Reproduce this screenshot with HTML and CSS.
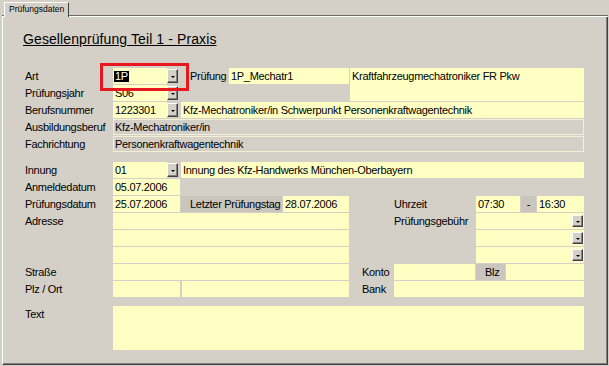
FILE: index.html
```html
<!DOCTYPE html>
<html lang="de">
<head>
    <meta charset="UTF-8">
    <title>Prüfungsdaten</title>
    <link rel="stylesheet" href="styles.css">
</head>
<body>
    <div class="tabs">
        <div class="tab">Prüfungsdaten</div>
    </div>

    <div class="panel">
        <h1 class="title">Gesellenprüfung Teil 1 - Praxis</h1>

        <div class="form">
            <span class="lbl a-lart">Art</span>
            <div class="combo a-art"><span class="combo-val"><span class="sel">1P</span></span><span class="btn"></span></div>
            <span class="lbl a-lpruef">Prüfung</span>
            <div class="fld a-pruef">1P_Mechatr1</div>
            <div class="fld a-desc">Kraftfahrzeugmechatroniker FR Pkw</div>

            <span class="lbl a-ljahr">Prüfungsjahr</span>
            <div class="combo a-jahr"><span class="combo-val">S06</span><span class="btn"></span></div>

            <span class="lbl a-lberuf">Berufsnummer</span>
            <div class="combo a-beruf"><span class="combo-val">1223301</span><span class="btn"></span></div>
            <div class="fld a-btext">Kfz-Mechatroniker/in Schwerpunkt Personenkraftwagentechnik</div>

            <span class="lbl a-lausb">Ausbildungsberuf</span>
            <div class="ro a-ausb">Kfz-Mechatroniker/in</div>

            <span class="lbl a-lfach">Fachrichtung</span>
            <div class="ro a-fach">Personenkraftwagentechnik</div>

            <span class="lbl a-linn">Innung</span>
            <div class="combo a-inn"><span class="combo-val">01</span><span class="btn"></span></div>
            <div class="fld a-itext">Innung des Kfz-Handwerks München-Oberbayern</div>

            <span class="lbl a-lanm">Anmeldedatum</span>
            <div class="fld a-anm">05.07.2006</div>

            <span class="lbl a-lpdat">Prüfungsdatum</span>
            <div class="fld a-pdat">25.07.2006</div>
            <div class="box a-letzt">Letzter Prüfungstag</div>
            <div class="fld a-ldat">28.07.2006</div>
            <span class="lbl a-luhr">Uhrzeit</span>
            <div class="fld a-uhr1">07:30</div>
            <div class="box dash a-dash">-</div>
            <div class="fld a-uhr2">16:30</div>

            <span class="lbl a-ladr">Adresse</span>
            <div class="fld a-adr1"></div>
            <div class="fld a-adr2"></div>
            <div class="fld a-adr3"></div>
            <span class="lbl a-lgeb">Prüfungsgebühr</span>
            <div class="combo full a-geb1"><span class="combo-val"></span><span class="btn small"></span></div>
            <div class="combo full a-geb2"><span class="combo-val"></span><span class="btn small"></span></div>
            <div class="combo full a-geb3"><span class="combo-val"></span><span class="btn small"></span></div>

            <span class="lbl a-lstr">Straße</span>
            <div class="fld a-str"></div>
            <span class="lbl side a-lkonto">Konto</span>
            <div class="fld a-konto"></div>
            <div class="box a-blz">Blz</div>
            <div class="fld a-blzf"></div>

            <span class="lbl a-lplz">Plz / Ort</span>
            <div class="fld a-plz"></div>
            <div class="fld a-ort"></div>
            <span class="lbl side a-lbank">Bank</span>
            <div class="fld a-bank"></div>

            <span class="lbl a-ltext">Text</span>
            <div class="fld a-text"></div>

            <!-- red marker around the Art combo -->
            <div class="mark"></div>
        </div>
    </div>
</body>
</html>
```

FILE: styles.css
```css
* {
    margin: 0;
    padding: 0;
    box-sizing: border-box;
}

body {
    font-family: "Liberation Sans", Arial, sans-serif;
    font-size: 11px;
    letter-spacing: -0.3px;
    background-color: #d4d0c8;
    color: #000;
    width: 609px;
    height: 366px;
    overflow: hidden;
}

/* tab strip */
.tabs {
    display: flex;
    height: 17px;
    margin-left: 2px;
    width: 606px;
    background: linear-gradient(to bottom, transparent 15px, #6b6b6b 15px, #6b6b6b 16px, #fff 16px);
}

.tab {
    margin-top: 2px;
    margin-left: 2px;
    height: 15px;
    padding: 0 4px;
    font-size: 8.5px;
    letter-spacing: 0;
    line-height: 13px;
    background-color: #d4d0c8;
    border-top: 1px solid #fff;
    border-left: 1px solid #fff;
    border-right: 1px solid #404040;
}

.panel {
    margin-left: 2px;
    width: 606px;
    height: 348px;
    padding: 14px 0 0 20px;
    border-left: 1px solid #fff;
    border-right: 1px solid #404040;
    border-bottom: 1px solid #404040;
    box-shadow: inset -1px -1px 0 #808080;
}

.title {
    font-size: 14px;
    font-weight: normal;
    letter-spacing: 0.1px;
    line-height: 16px;
    text-decoration: underline;
    margin-bottom: 21px;
}

/* form grid */
.form {
    position: relative;
    margin-left: 2px;
    display: grid;
    grid-template-columns: 88px 68px 48px 54px 67px 44px 82px 30px 15px 16px 48px;
    grid-template-rows: 17px 17px 17px 17px 17px 9px 17px 17px 17px 17px 17px 17px 17px 17px 8px 45px;
    grid-template-areas:
        "lart art lpruef pruef pruef desc desc desc desc desc desc"
        "ljahr jahr . . . desc desc desc desc desc desc"
        "lberuf beruf btext btext btext btext btext btext btext btext btext"
        "lausb ausb ausb ausb ausb ausb ausb ausb ausb ausb ausb"
        "lfach fach fach fach fach fach fach fach fach fach fach"
        ". . . . . . . . . . ."
        "linn inn itext itext itext itext itext itext itext itext itext"
        "lanm anm . . . . . . . . ."
        "lpdat pdat letzt letzt ldat . luhr uhr1 uhr1 dash uhr2"
        "ladr adr1 adr1 adr1 adr1 . lgeb geb1 geb1 geb1 geb1"
        ". adr2 adr2 adr2 adr2 . . geb2 geb2 geb2 geb2"
        ". adr3 adr3 adr3 adr3 . . geb3 geb3 geb3 geb3"
        "lstr str str str str lkonto konto blz blzf blzf blzf"
        "lplz plz ort ort ort lbank bank bank bank bank bank"
        ". . . . . . . . . . ."
        "ltext text text text text text text text text text text";
}

.lbl {
    line-height: 16px;
    white-space: nowrap;
}

.a-lpruef {
    padding-left: 9px;
}

.side {
    padding-left: 12px;
}

.fld {
    background-color: #ffffc4;
    margin: 0 1px 1px 0;
    padding-left: 2px;
    line-height: 16px;
    white-space: nowrap;
    overflow: hidden;
}

.ro {
    margin: 0 1px 1px 0;
    padding-left: 1px;
    line-height: 14px;
    border: 1px solid #f3f0d2;
    white-space: nowrap;
}

.box {
    background-color: #cac6be;
    margin: 0 1px 1px 0;
    padding-left: 9px;
    line-height: 16px;
    white-space: nowrap;
}

.dash {
    padding-left: 0;
    text-align: center;
}

.combo {
    display: flex;
    align-items: center;
    margin: 0 1px 1px 0;
}

.combo-val {
    flex: 1;
    align-self: stretch;
    background-color: #ffffc4;
    padding-left: 2px;
    line-height: 16px;
    white-space: nowrap;
}

.combo.full {
    background-color: #ffffc4;
}

.sel {
    display: inline-block;
    background-color: #000;
    color: #fff;
    line-height: 11px;
    margin-left: -1px;
    padding: 0 1px;
}

.btn {
    width: 11px;
    height: 14px;
    margin-right: 2px;
    display: flex;
    align-items: center;
    justify-content: center;
    padding-top: 1px;
    background-color: #d4d0c8;
    border-top: 1px solid #fff;
    border-left: 1px solid #fff;
    border-right: 1px solid #404040;
    border-bottom: 1px solid #404040;
    box-shadow: inset -1px -1px 0 #808080;
}

.btn::after {
    content: "";
    border-left: 2px solid transparent;
    border-right: 2px solid transparent;
    border-top: 2px solid #000;
}

.btn.small {
    height: 12px;
    margin-right: 1px;
}

.a-lart { grid-area: lart; }
.a-art { grid-area: art; }
.a-lpruef { grid-area: lpruef; }
.a-pruef { grid-area: pruef; }
.a-desc { grid-area: desc; }
.a-ljahr { grid-area: ljahr; }
.a-jahr { grid-area: jahr; }
.a-lberuf { grid-area: lberuf; }
.a-beruf { grid-area: beruf; }
.a-btext { grid-area: btext; }
.a-lausb { grid-area: lausb; }
.a-ausb { grid-area: ausb; }
.a-lfach { grid-area: lfach; }
.a-fach { grid-area: fach; }
.a-linn { grid-area: linn; }
.a-inn { grid-area: inn; }
.a-itext { grid-area: itext; }
.a-lanm { grid-area: lanm; }
.a-anm { grid-area: anm; }
.a-lpdat { grid-area: lpdat; }
.a-pdat { grid-area: pdat; }
.a-letzt { grid-area: letzt; }
.a-ldat { grid-area: ldat; }
.a-luhr { grid-area: luhr; }
.a-uhr1 { grid-area: uhr1; }
.a-dash { grid-area: dash; }
.a-uhr2 { grid-area: uhr2; }
.a-ladr { grid-area: ladr; }
.a-adr1 { grid-area: adr1; }
.a-adr2 { grid-area: adr2; }
.a-adr3 { grid-area: adr3; }
.a-lgeb { grid-area: lgeb; }
.a-geb1 { grid-area: geb1; }
.a-geb2 { grid-area: geb2; }
.a-geb3 { grid-area: geb3; }
.a-lstr { grid-area: lstr; }
.a-str { grid-area: str; }
.a-lkonto { grid-area: lkonto; }
.a-konto { grid-area: konto; }
.a-blz { grid-area: blz; }
.a-blzf { grid-area: blzf; }
.a-lplz { grid-area: lplz; }
.a-plz { grid-area: plz; }
.a-ort { grid-area: ort; margin-left: 1px; }
.a-lbank { grid-area: lbank; }
.a-bank { grid-area: bank; }
.a-ltext { grid-area: ltext; }
.a-text { grid-area: text; }

.a-desc {
    padding-left: 2px;
}

/* red highlight frame drawn over the Art combo */
.mark {
    position: absolute;
    left: 75px;
    top: -5px;
    width: 89px;
    height: 28px;
    border: 3px solid #e8161e;
}
```
